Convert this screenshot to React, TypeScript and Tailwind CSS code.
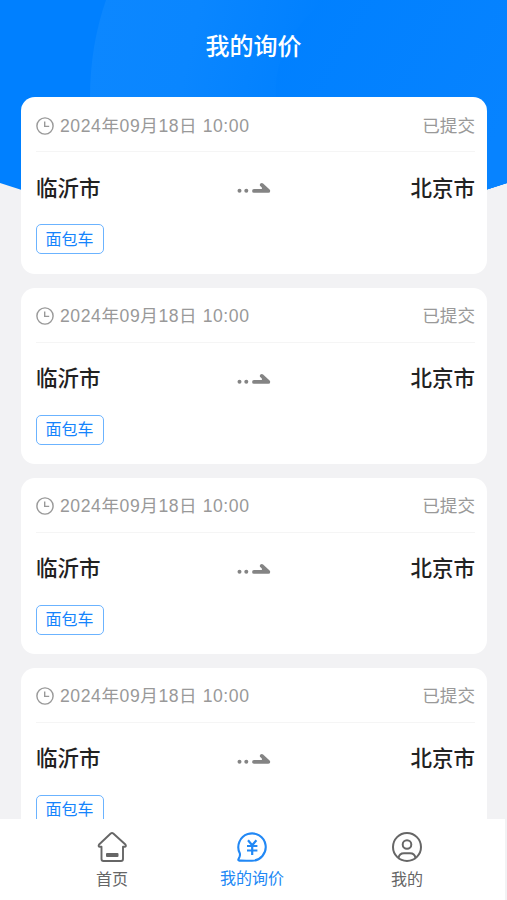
import React from "react";

type Inquiry = { id: number; time: string; status: string; from: string; to: string; tag: string };

const inquiries: Inquiry[] = [1, 2, 3, 4].map((id) => ({
  id,
  time: "2024年09月18日 10:00",
  status: "已提交",
  from: "临沂市",
  to: "北京市",
  tag: "面包车",
}));

function HeaderBackdrop() {
  return (
    <svg className="absolute left-0 top-0" width="507" height="230" viewBox="0 0 507 230" aria-hidden="true">
      <defs>
        <linearGradient id="glow" gradientUnits="userSpaceOnUse" x1="90" y1="30" x2="310" y2="80">
          <stop offset="0" stopColor="#0c87ff" />
          <stop offset="0.45" stopColor="#0a86ff" />
          <stop offset="1" stopColor="#0080ff" />
        </linearGradient>
        <linearGradient id="glowRight" gradientUnits="userSpaceOnUse" x1="300" y1="0" x2="507" y2="120">
          <stop offset="0" stopColor="#0080ff" />
          <stop offset="1" stopColor="#0783ff" />
        </linearGradient>
        <clipPath id="dome">
          <path d="M0 0H507V183Q253.500 270 0 183Z" />
        </clipPath>
      </defs>
      <g clipPath="url(#dome)">
        <rect width="507" height="230" fill="#0080ff" />
        <path d="M106 0Q90 46 90 98V230H507V0Z" fill="url(#glow)" />
        <path d="M325 0Q272 43 276 98V230H507V0Z" fill="url(#glowRight)" />
      </g>
    </svg>
  );
}

function ClockIcon() {
  return (
    <svg width="18" height="18" viewBox="0 0 18 18" fill="none" stroke="#999" strokeWidth="1.4" aria-hidden="true">
      <circle cx="9" cy="9" r="8.100" />
      <path d="M8.700 4.500V9.400H13.200" />
    </svg>
  );
}

function RouteArrow() {
  return (
    <svg width="34" height="14" viewBox="0 0 34 14" aria-hidden="true">
      <circle cx="2.500" cy="9.800" r="2" fill="#848484" />
      <circle cx="9.300" cy="9.800" r="2" fill="#848484" />
      <path d="M17 9.900H31.300L24.800 3.900" fill="none" stroke="#848484" strokeWidth="3.800" strokeLinecap="round" strokeLinejoin="round" />
      <path d="M24.800 4L31 9.900H25Z" fill="#848484" />
    </svg>
  );
}

function InquiryCard({ item }: { item: Inquiry }) {
  return (
    <article className="h-[176.300px] shrink-0 rounded-[14px] bg-white pl-[15px] pr-[12px]">
      <div className="flex h-[55px] items-center justify-between border-b border-[#f5f5f5] pt-[3px] text-[17.600px] text-[#999]">
        <div className="flex items-center gap-[6px]">
          <ClockIcon />
          <span className="whitespace-nowrap tracking-[0.560px]">{item.time}</span>
        </div>
        <span>{item.status}</span>
      </div>
      <div className="mt-[16px] flex h-[40px] items-center justify-between text-[21.500px] font-medium text-[#222]">
        <span className="pt-[1px]">{item.from}</span>
        <div className="pr-[3px]">
          <RouteArrow />
        </div>
        <span className="pt-[1px]">{item.to}</span>
      </div>
      <span className="mt-[16px] flex h-[30px] w-[68px] items-center justify-center rounded-[5px] border border-[#6bb3ff] pr-[1px] pt-[1px] text-[16px] text-[#1684fc]">
        {item.tag}
      </span>
    </article>
  );
}

function HomeIcon() {
  return (
    <svg width="32" height="32" viewBox="0 0 32 32" fill="none" stroke="#666" strokeWidth="1.900" strokeLinejoin="round" aria-hidden="true">
      <path d="M14.700 2.500Q16 1.400 17.300 2.500L29.400 13.500Q30.700 15.600 28.500 15.800H27V28Q27 30 25 30H7.500Q5.500 30 5.500 28V15.800H4Q1.800 15.600 3.100 13.500Z" />
      <rect x="10" y="22" width="12.500" height="4" rx="1" fill="#666" stroke="none" />
    </svg>
  );
}

function YuanBubbleIcon() {
  return (
    <svg width="32" height="32" viewBox="0 0 32 32" fill="none" stroke="#2188f5" strokeWidth="2.100" strokeLinejoin="round" aria-hidden="true">
      <path d="M16 29.800A13.700 13.700 0 1 0 3.800 22.300C4.300 23.600 4 24.500 3.500 25.800L2.400 28.300Q2 29.500 3.300 29.600C7.500 29.500 11.500 29.800 16 29.800Z" />
      <path d="M12 9.300L16.200 14.200L20.400 9.300M11 15H21.400M11 19.500H21.400M16.200 14.200V24" strokeWidth="2.200" />
    </svg>
  );
}

function ProfileIcon() {
  return (
    <svg width="32" height="32" viewBox="0 0 32 32" fill="none" stroke="#666" strokeWidth="2" aria-hidden="true">
      <circle cx="16" cy="16" r="14" />
      <circle cx="16" cy="13.500" r="4.300" />
      <path d="M7.500 27C8 23.500 9.800 22.300 13 22.300H19C22.200 22.300 24 23.500 24.500 27" />
    </svg>
  );
}

export default function App() {
  return (
    <div
      className="relative h-[900px] w-[507px] overflow-hidden bg-[#f2f2f4]"
      style={{ fontFamily: '"Liberation Sans", "Noto Sans CJK SC", sans-serif' }}
    >
      <HeaderBackdrop />
      <div className="relative flex h-full flex-col">
        <header className="flex h-[97.400px] shrink-0 items-center justify-center pb-[4px] text-[24px] font-medium text-white">
          <h1>我的询价</h1>
        </header>
        <main className="flex h-[721.600px] shrink-0 flex-col gap-[13.900px] overflow-hidden pl-[21px] pr-[20px]">
          {inquiries.map((item) => (
            <InquiryCard key={item.id} item={item} />
          ))}
        </main>
        <nav className="flex h-[81px] w-[505px] shrink-0 bg-white pl-[80px] pt-[12px] text-[16px] leading-[24px] text-[#666]">
          <a className="flex w-[64px] flex-col items-center gap-[5px]">
            <HomeIcon />
            <span>首页</span>
          </a>
          <a className="ml-[76px] flex w-[64px] flex-col items-center gap-[4px] text-[#2188f5]">
            <YuanBubbleIcon />
            <span className="whitespace-nowrap">我的询价</span>
          </a>
          <a className="ml-[91px] flex w-[64px] flex-col items-center gap-[5px]">
            <ProfileIcon />
            <span>我的</span>
          </a>
        </nav>
      </div>
    </div>
  );
}
